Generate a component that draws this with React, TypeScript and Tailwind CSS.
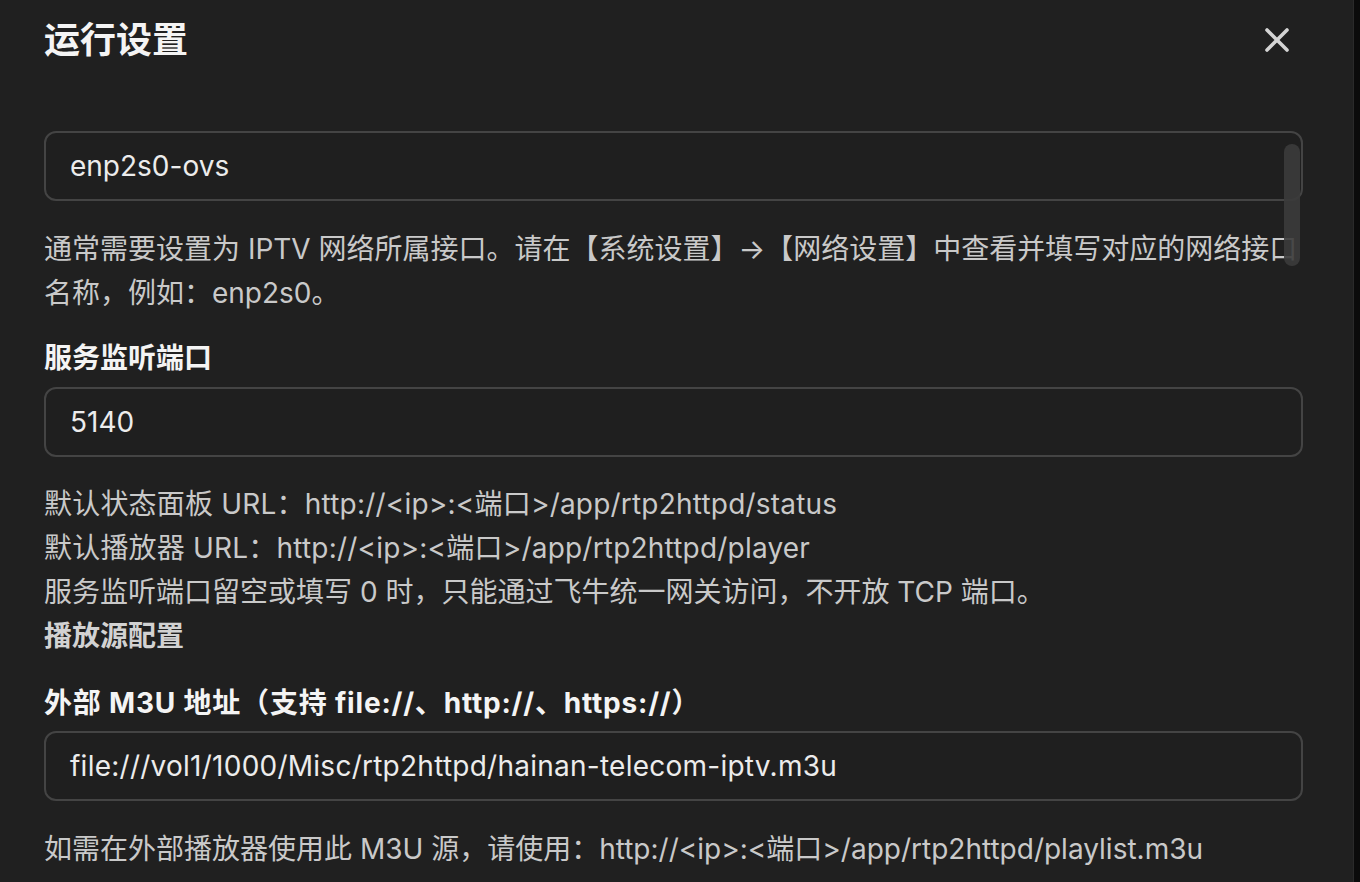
import React from "react";

const font = {
  fontFamily:
    '"PingFang SC", Inter, "Noto Sans CJK SC", "Noto Sans", sans-serif',
};

function Field({ value, className = "" }: { value: string; className?: string }) {
  return (
    <div
      className={`h-[70px] rounded-[12px] border-2 border-[#444444] bg-[#1f1f1f] pl-[24px] flex items-center text-[28px] text-[#ececec] ${className}`}
    >
      {value}
    </div>
  );
}

type Line = { text: string; wide?: boolean };

function Help({ lines, className = "" }: { lines: Line[]; className?: string }) {
  return (
    <div className={`text-[28px] leading-[44px] text-[#c9c9c9] ${className}`}>
      {lines.map((l) => (
        <div key={l.text} className={`whitespace-nowrap ${l.wide ? "tracking-[0.2px]" : ""}`}>
          {l.text}
        </div>
      ))}
    </div>
  );
}

export default function App() {
  return (
    <div className="w-[1360px] h-[882px] overflow-hidden flex bg-[#0b0b0b]" style={font}>
      <div className="relative w-[1354px] h-full bg-[#202020] border-r border-[#2a2a2a] pl-[44px] pr-[50px]">
        {/* header */}
        <div className="h-[80px] flex items-center justify-between">
          <h1 className="text-[36px] font-bold text-[#f4f4f4] leading-none -mt-[1px]">运行设置</h1>
          <button className="mr-[14px] w-[24px] h-[24px] flex items-center justify-center text-[#d4d4d4]">
            <svg width="24" height="24" viewBox="0 0 24 24" fill="none">
              <path d="M2 2 L22 22 M22 2 L2 22" stroke="currentColor" strokeWidth="3.6" strokeLinecap="round" />
            </svg>
          </button>
        </div>

        <div className="pt-[51px]">
          <Field value="enp2s0-ovs" />
          <Help
            className="mt-[26px]"
            lines={[
              { text: "通常需要设置为 IPTV 网络所属接口。请在【系统设置】→【网络设置】中查看并填写对应的网络接口" },
              { text: "名称，例如：enp2s0。" },
            ]}
          />

          <div className="mt-[21px] text-[28px] leading-[44px] font-bold text-[#f4f4f4]">服务监听端口</div>
          <div className="mt-[7px]">
            <Field value="5140" />
          </div>
          <Help
            className="mt-[25px]"
            lines={[
              { text: "默认状态面板 URL：http://<ip>:<端口>/app/rtp2httpd/status", wide: true },
              { text: "默认播放器 URL：http://<ip>:<端口>/app/rtp2httpd/player", wide: true },
              { text: "服务监听端口留空或填写 0 时，只能通过飞牛统一网关访问，不开放 TCP 端口。" },
            ]}
          />
          <div className="text-[28px] leading-[44px] font-bold text-[#d2d2d2]">播放源配置</div>

          <div className="mt-[23px] text-[28px] leading-[44px] font-bold text-[#f4f4f4] whitespace-nowrap tracking-[0.8px]">
            外部 M3U 地址（支持 file://、http://、https://）
          </div>
          <div className="mt-[6px]">
            <Field value="file:///vol1/1000/Misc/rtp2httpd/hainan-telecom-iptv.m3u" className="tracking-[0.25px]" />
          </div>
          <Help
            className="mt-[26px]"
            lines={[
              {
                text: "如需在外部播放器使用此 M3U 源，请使用：http://<ip>:<端口>/app/rtp2httpd/playlist.m3u",
              },
            ]}
          />
        </div>

        {/* overlay scrollbar thumb */}
        <div className="absolute left-[1284px] top-[144px] w-[16px] h-[122px] rounded-full bg-[#3b3b3b]/90" />
      </div>
    </div>
  );
}
